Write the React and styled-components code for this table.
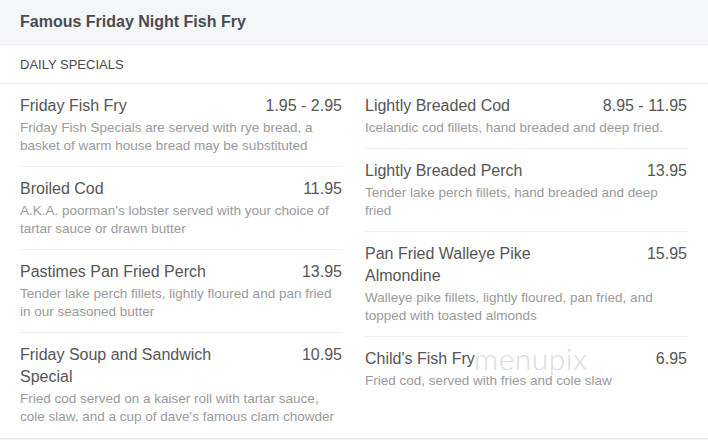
import React from "react";
import styled, { createGlobalStyle } from "styled-components";

const GlobalStyle = createGlobalStyle`
  html, body {
    margin: 0;
    padding: 0;
    background: #f4f4f7;
    font-family: "Liberation Sans", Arial, sans-serif;
  }
`;

const Card = styled.div`
  position: relative;
  width: 708px;
  background: #ffffff;
  border-bottom: 1px solid #e6e6ea;
`;

const Header = styled.div`
  height: 45px;
  box-sizing: border-box;
  padding: 0 20px;
  display: flex;
  align-items: center;
  background: #f5f6f9;
  border-bottom: 1px solid #ebebef;
  font-size: 16px;
  font-weight: bold;
  color: #4b4b4f;
`;

const SectionLabel = styled.div`
  height: 39px;
  box-sizing: border-box;
  padding: 1px 20px 0;
  display: flex;
  align-items: center;
  border-bottom: 1px solid #efeff2;
  font-size: 13px;
  color: #4a4a4a;
  text-transform: uppercase;
`;

const Columns = styled.div`
  display: grid;
  grid-template-columns: 322px 322px;
  column-gap: 23px;
  padding: 0 21px 1px 20px;
  align-items: start;
`;

const Column = styled.div`
  display: flex;
  flex-direction: column;
`;

const Item = styled.div`
  padding: 11px 0 11px;
  border-bottom: ${(p) => (p.last ? "none" : "1px solid #efeff1")};
`;

const NameRow = styled.div`
  display: flex;
  justify-content: space-between;
  align-items: flex-start;
  font-size: 16px;
  line-height: 22px;
  color: #555555;
  margin-bottom: 2px;
`;

const Name = styled.div`
  max-width: 225px;
`;

const Price = styled.div`
  white-space: nowrap;
  text-align: right;
`;

const Desc = styled.div`
  font-size: 13.5px;
  line-height: 18px;
  color: #9a9a9a;
`;

const Watermark = styled.div`
  position: absolute;
  left: 474px;
  top: 340px;
  font-family: Lato, "Open Sans", sans-serif;
  font-weight: 300;
  font-size: 30px;
  letter-spacing: 0.5px;
  color: rgba(195, 195, 195, 0.6);
  pointer-events: none;
`;

const left = [
  {
    name: "Friday Fish Fry",
    price: "1.95 - 2.95",
    desc: "Friday Fish Specials are served with rye bread, a basket of warm house bread may be substituted",
  },
  {
    name: "Broiled Cod",
    price: "11.95",
    desc: "A.K.A. poorman's lobster served with your choice of tartar sauce or drawn butter",
  },
  {
    name: "Pastimes Pan Fried Perch",
    price: "13.95",
    desc: "Tender lake perch fillets, lightly floured and pan fried in our seasoned butter",
  },
  {
    name: "Friday Soup and Sandwich Special",
    price: "10.95",
    desc: "Fried cod served on a kaiser roll with tartar sauce, cole slaw, and a cup of dave's famous clam chowder",
  },
];

const right = [
  {
    name: "Lightly Breaded Cod",
    price: "8.95 - 11.95",
    desc: "Icelandic cod fillets, hand breaded and deep fried.",
  },
  {
    name: "Lightly Breaded Perch",
    price: "13.95",
    desc: "Tender lake perch fillets, hand breaded and deep fried",
  },
  {
    name: "Pan Fried Walleye Pike Almondine",
    price: "15.95",
    desc: "Walleye pike fillets, lightly floured, pan fried, and topped with toasted almonds",
  },
  {
    name: "Child's Fish Fry",
    price: "6.95",
    desc: "Fried cod, served with fries and cole slaw",
  },
];

const MenuColumn = ({ items }) => (
  <Column>
    {items.map((item, i) => (
      <Item key={item.name} last={i === items.length - 1}>
        <NameRow>
          <Name>{item.name}</Name>
          <Price>{item.price}</Price>
        </NameRow>
        <Desc>{item.desc}</Desc>
      </Item>
    ))}
  </Column>
);

const App = () => {
  return (
    <>
      <GlobalStyle />
      <Card>
        <Header>Famous Friday Night Fish Fry</Header>
        <SectionLabel>Daily Specials</SectionLabel>
        <Columns>
          <MenuColumn items={left} />
          <MenuColumn items={right} />
        </Columns>
        <Watermark>menupix</Watermark>
      </Card>
    </>
  );
};

export default App;
